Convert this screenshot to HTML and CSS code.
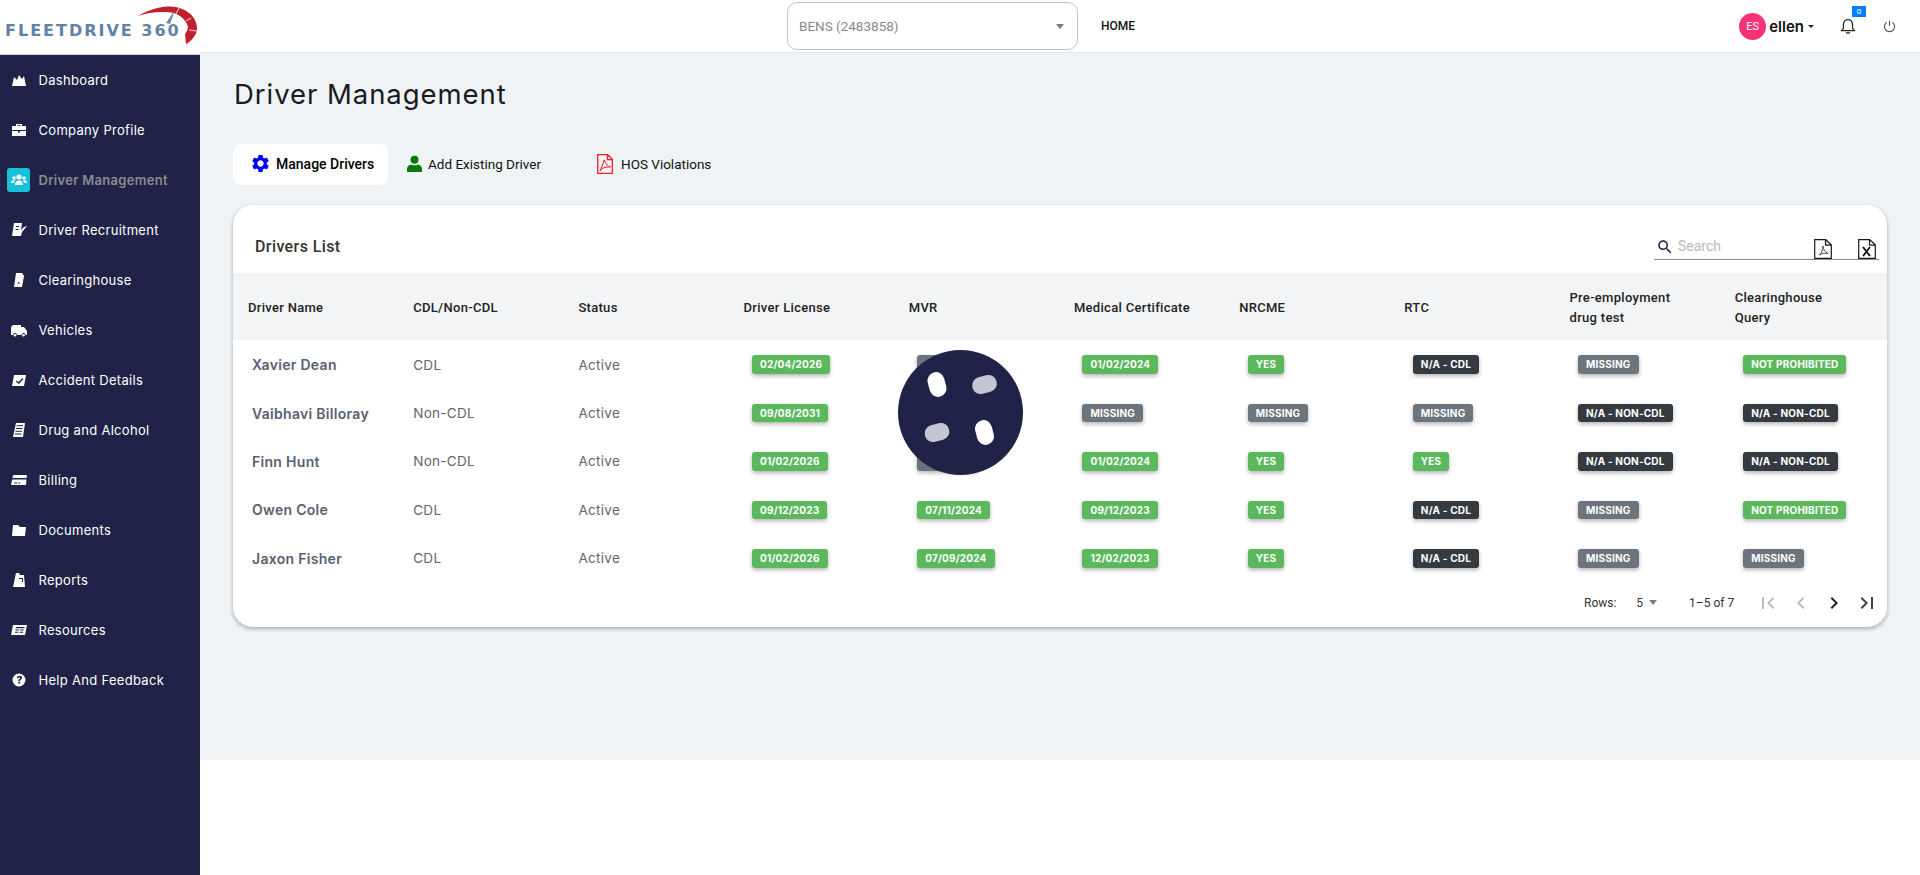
FILE: index.html
```html
<!DOCTYPE html>
<html lang="en">
  <head>
    <meta charset="UTF-8" />
    <meta name="viewport" content="width=device-width, initial-scale=1.0" />
    <title>FleetDrive 360 - Driver Management</title>
    <link rel="stylesheet" href="styles.css">
  </head>
  <body>
    <div class="container">
      <div class="header">
        <div class="logo">
          <span class="logo-text">FLEETDRIVE 360</span>
          <svg class="logo-gauge" viewBox="0 0 200 54">
            <path d="M138 16C150 9 160 6.500 170 6.500 186 7 197 17 197 28c0 6-4 12-11 16l-1-10c3-4 3.500-7 2-10-4-8-12-12-21-12-11-.5-19 1-28 4z" fill="#c01f30"/>
            <path d="M179 8l-3 6M191 18l-5 3M197 31l-8-1" stroke="#fff" stroke-width=".8"/>
            <path d="M166 23l9-13-5 14z" fill="#6d8cab"/>
          </svg>
        </div>
        <div class="account-select">
          <span>BENS (2483858)</span>
          <i class="caret caret-grey"></i>
        </div>
        <a class="home-link">HOME</a>
        <div class="user-area">
          <div class="avatar">ES</div>
          <span class="user-name">ellen</span>
          <i class="caret caret-dark"></i>
          <div class="bell">
            <svg viewBox="0 0 14 14" width="16" height="16"><path d="M7 1.500c-2.800 0-4 2-4 4.500v3L1.500 11h11L11 9V6c0-2.500-1.200-4.500-4-4.500zM5.500 12.500c.3 1 2.700 1 3 0" fill="none" stroke="#222" stroke-width="1.100"/></svg>
            <span class="bell-count">0</span>
          </div>
          <svg class="power" viewBox="0 0 14 14" width="13" height="13"><path d="M4 2.500a5.500 5.500 0 1 0 6 0M7 .8v5.400" fill="none" stroke="#3a4660" stroke-width="1.100"/></svg>
        </div>
      </div>

      <div class="main-content">
        <div class="sidebar">
          <a class="nav-item">
            <span class="nav-icon"><svg viewBox="0 0 16 16"><path d="M1 14l2-9 3 3 2-5 3 4 2-3 2 10z"/></svg></span>
            Dashboard
          </a>
          <a class="nav-item">
            <span class="nav-icon"><svg viewBox="0 0 16 16"><path d="M5 4V2h6v2h4v4H1V4zm1.300 0h3.400V3.200H6.300zM1 9h6v1.500h2V9h6v5H1z"/></svg></span>
            Company Profile
          </a>
          <a class="nav-item active">
            <span class="nav-icon"><svg viewBox="0 0 16 16"><circle cx="8" cy="5" r="2.600"/><circle cx="3" cy="6" r="1.800"/><circle cx="13" cy="6" r="1.800"/><path d="M4 13c0-3 1.500-4.500 4-4.500s4 1.500 4 4.500zM0 11c0-2 1-3 3-3l1 .5C3.200 9.300 3 10 3 11zM16 11c0-2-1-3-3-3l-1 .5c.8.8 1 1.500 1 2.500z"/></svg></span>
            Driver Management
          </a>
          <a class="nav-item">
            <span class="nav-icon"><svg viewBox="0 0 16 16"><path d="M3 1h8l-1 7 3-3 3-1-5 6-1 4H1zM5 4v1h3V4zM4.500 7v1h3V7z"/></svg></span>
            Driver Recruitment
          </a>
          <a class="nav-item">
            <span class="nav-icon"><svg viewBox="0 0 16 16"><path d="M5 1h6l2 3-2 11H3zM7 6c1 3 1 4-1 6 2-1 3-1 4 0-2-1-3-3-3-6z"/></svg></span>
            Clearinghouse
          </a>
          <a class="nav-item">
            <span class="nav-icon"><svg viewBox="0 0 16 16"><path d="M2 3h8v2h3l3 4v4h-1.500a2 2 0 0 0-4 0H6a2 2 0 0 0-4 0H0V5z"/><circle cx="4" cy="13.200" r="1.300"/><circle cx="12.500" cy="13.200" r="1.300"/></svg></span>
            Vehicles
          </a>
          <a class="nav-item">
            <span class="nav-icon"><svg viewBox="0 0 16 16"><path fill-rule="evenodd" d="M3 3h12l-2 11H1zm8.500 3L7.500 10 5.500 8.500 5 9.700 7.800 12l4.700-5z"/></svg></span>
            Accident Details
          </a>
          <a class="nav-item">
            <span class="nav-icon"><svg viewBox="0 0 16 16"><path d="M5 1h9l-2 14H2zM5.500 3.200v1h6.500v-1zM5 6v1h6.500V6zM4.500 8.800v1H11v-1zM4 11.500v1h6.500v-1z"/></svg></span>
            Drug and Alcohol
          </a>
          <a class="nav-item">
            <span class="nav-icon"><svg viewBox="0 0 16 16"><path fill-rule="evenodd" d="M3 3h13l-.5 3H1.500C1.800 4 2 3 3 3zM1.200 7.500h14.300L15 13H0zm2 3v1h3v-1zm4 0v1h2v-1z"/></svg></span>
            Billing
          </a>
          <a class="nav-item">
            <span class="nav-icon"><svg viewBox="0 0 16 16"><path d="M2 3h5l2 2h6l-1 9H1z"/></svg></span>
            Documents
          </a>
          <a class="nav-item">
            <span class="nav-icon"><svg viewBox="0 0 16 16"><path d="M5 1h3l1 2h4l1 12H2zM8 6v1h3v3h1V6z"/></svg></span>
            Reports
          </a>
          <a class="nav-item">
            <span class="nav-icon"><svg viewBox="0 0 16 16"><path fill-rule="evenodd" d="M2 3h14l-2 10H0zM5 5l-.2 1.200h8.500L13.500 5zM4.500 7.500l-.2 1h3.500l.2-1zm4.700 0l-.2 1h3.500l.2-1zM4 9.800l-.2 1h3.500l.2-1zm4.700 0l-.2 1H12l.2-1z"/></svg></span>
            Resources
          </a>
          <a class="nav-item">
            <span class="nav-icon"><svg viewBox="0 0 16 16"><path fill-rule="evenodd" d="M8 1.500a6.500 6.500 0 1 1 0 13 6.500 6.500 0 0 1 0-13zM5.800 6.300h1.800c.1-.8.4-1 .9-1s.8.300.7.8c-.1.600-1.700 1-1.900 2.900h1.700c.2-1 2-1.500 2.100-3.200C11.200 4.500 10 3.700 8.500 3.700c-1.500 0-2.600 1-2.700 2.600zM7.200 9.800v1.700H9V9.800z"/></svg></span>
            Help And Feedback
          </a>
        </div>

        <div class="page">
          <div class="page-body">
            <h1 class="page-title">Driver Management</h1>

            <div class="tabs">
              <a class="tab tab-active">
                <svg viewBox="0 0 24 24" width="21" height="21"><path d="M19.140 12.940c.04-.3.06-.61.06-.94 0-.32-.02-.64-.07-.94l2.030-1.580c.18-.14.23-.41.12-.61l-1.920-3.320c-.12-.22-.37-.29-.59-.22l-2.390.96c-.5-.38-1.030-.7-1.620-.94l-.36-2.540c-.04-.24-.24-.41-.48-.41h-3.840c-.24 0-.43.17-.47.41l-.36 2.540c-.59.24-1.130.57-1.620.94l-2.390-.96c-.22-.08-.47 0-.59.22L2.740 8.870c-.12.21-.08.47.12.61l2.030 1.580c-.05.3-.09.63-.09.94s.02.64.07.94l-2.030 1.580c-.18.14-.23.41-.12.61l1.920 3.320c.12.22.37.29.59.22l2.390-.96c.5.38 1.030.7 1.620.94l.36 2.540c.05.24.24.41.48.41h3.840c.24 0 .44-.17.47-.41l.36-2.540c.59-.24 1.130-.56 1.620-.94l2.390.96c.22.08.47 0 .59-.22l1.920-3.320c.12-.22.07-.47-.12-.61l-2.010-1.580zM12 15.600c-1.980 0-3.600-1.620-3.600-3.600s1.620-3.600 3.600-3.600 3.600 1.620 3.600 3.600-1.620 3.600-3.600 3.600z" fill="#0000ff"/></svg>
                Manage Drivers
              </a>
              <a class="tab tab-add">
                <svg viewBox="0 0 16 18" width="15" height="17"><circle cx="8" cy="5" r="4.300" fill="#0a7a0a"/><path d="M0 18v-3c0-3 2-4.500 4.500-5 2 1.300 5 1.300 7 0 2.500.5 4.500 2 4.500 5v3z" fill="#0a7a0a"/></svg>
                Add Existing Driver
              </a>
              <a class="tab tab-hos">
                <svg viewBox="0 0 16 20" width="16" height="20"><path d="M.7.700h10l4.600 4.600v14H.7zM10.500.700v5h4.800" fill="none" stroke="#f01c2c" stroke-width="1.300"/><path d="M7.500 6c1 4 3 6 6 7-3-.2-6 .3-8.500 1.500L3 17c1-3 3-6 4-11" fill="none" stroke="#f01c2c" stroke-width="1"/></svg>
                HOS Violations
              </a>
            </div>

            <div class="card">
              <div class="card-head">
                <h3>Drivers List</h3>
                <div class="search-box">
                  <svg class="search-icon" viewBox="0 0 24 24" width="18" height="18"><path d="M15.500 14h-.79l-.28-.27C15.410 12.590 16 11.110 16 9.500 16 5.910 13.090 3 9.500 3S3 5.910 3 9.500 5.910 16 9.500 16c1.610 0 3.090-.59 4.230-1.570l.27.28v.79l5 4.990L20.490 19l-4.990-5zm-6 0C7.010 14 5 11.990 5 9.500S7.010 5 9.500 5 14 7.010 14 9.500 11.990 14 9.500 14z" fill="#1b2340"/></svg>
                  <span class="search-text">Search</span>
                  <svg class="export-icon" viewBox="0 0 18 20" width="18" height="20"><path d="M.7.700h11l5.600 5v13.600H.7zM11.500.700v5.500h5.800" fill="#fff" stroke="#1a1a1a" stroke-width="1.200"/><path d="M9 7c.3 3.500 2 6 5 7.500-3-.6-6-.3-8.500 1.500 2-2 3.300-5 3.500-9z" fill="none" stroke="#333" stroke-width=".9"/></svg>
                  <svg class="export-icon export-xls" viewBox="0 0 18 20" width="18" height="20"><path d="M.7.700h11l5.600 5v13.600H.7zM11.500.700v5.500h5.800" fill="#fff" stroke="#1a1a1a" stroke-width="1.200"/><path d="M5 8l7 9M12 8l-7 9" stroke="#111" stroke-width="1.800"/></svg>
                </div>
              </div>

              <table class="drivers-table">
                <thead>
                  <tr>
                    <th>Driver Name</th>
                    <th>CDL/Non-CDL</th>
                    <th>Status</th>
                    <th>Driver License</th>
                    <th>MVR</th>
                    <th>Medical Certificate</th>
                    <th>NRCME</th>
                    <th>RTC</th>
                    <th>Pre-employment drug test</th>
                    <th>Clearinghouse Query</th>
                  </tr>
                </thead>
                <tbody>
                  <tr>
                    <td class="name">Xavier Dean</td>
                    <td>CDL</td>
                    <td>Active</td>
                    <td><span class="badge green">02/04/2026</span></td>
                    <td><span class="badge grey">MISSING</span></td>
                    <td><span class="badge green">01/02/2024</span></td>
                    <td><span class="badge green">YES</span></td>
                    <td><span class="badge dark">N/A - CDL</span></td>
                    <td><span class="badge grey">MISSING</span></td>
                    <td><span class="badge green">NOT PROHIBITED</span></td>
                  </tr>
                  <tr>
                    <td class="name">Vaibhavi Billoray</td>
                    <td>Non-CDL</td>
                    <td>Active</td>
                    <td><span class="badge green">09/08/2031</span></td>
                    <td><span class="badge grey">MISSING</span></td>
                    <td><span class="badge grey">MISSING</span></td>
                    <td><span class="badge grey">MISSING</span></td>
                    <td><span class="badge grey">MISSING</span></td>
                    <td><span class="badge dark">N/A - NON-CDL</span></td>
                    <td><span class="badge dark">N/A - NON-CDL</span></td>
                  </tr>
                  <tr>
                    <td class="name">Finn Hunt</td>
                    <td>Non-CDL</td>
                    <td>Active</td>
                    <td><span class="badge green">01/02/2026</span></td>
                    <td><span class="badge grey">MISSING</span></td>
                    <td><span class="badge green">01/02/2024</span></td>
                    <td><span class="badge green">YES</span></td>
                    <td><span class="badge green">YES</span></td>
                    <td><span class="badge dark">N/A - NON-CDL</span></td>
                    <td><span class="badge dark">N/A - NON-CDL</span></td>
                  </tr>
                  <tr>
                    <td class="name">Owen Cole</td>
                    <td>CDL</td>
                    <td>Active</td>
                    <td><span class="badge green">09/12/2023</span></td>
                    <td><span class="badge green">07/11/2024</span></td>
                    <td><span class="badge green">09/12/2023</span></td>
                    <td><span class="badge green">YES</span></td>
                    <td><span class="badge dark">N/A - CDL</span></td>
                    <td><span class="badge grey">MISSING</span></td>
                    <td><span class="badge green">NOT PROHIBITED</span></td>
                  </tr>
                  <tr>
                    <td class="name">Jaxon Fisher</td>
                    <td>CDL</td>
                    <td>Active</td>
                    <td><span class="badge green">01/02/2026</span></td>
                    <td><span class="badge green">07/09/2024</span></td>
                    <td><span class="badge green">12/02/2023</span></td>
                    <td><span class="badge green">YES</span></td>
                    <td><span class="badge dark">N/A - CDL</span></td>
                    <td><span class="badge grey">MISSING</span></td>
                    <td><span class="badge grey">MISSING</span></td>
                  </tr>
                </tbody>
              </table>

              <div class="pager">
                <span class="pager-rows">Rows:</span>
                <span class="pager-size">5</span>
                <i class="caret caret-grey"></i>
                <span class="pager-range">1–5 of 7</span>
                <div class="pager-buttons">
                  <svg viewBox="0 0 24 24" fill="#bdbdbd"><path d="M18.410 16.590L13.820 12l4.590-4.590L17 6l-6 6 6 6zM6 6h2v12H6z"/></svg>
                  <svg viewBox="0 0 24 24" fill="#bdbdbd"><path d="M15.410 7.410L14 6l-6 6 6 6 1.410-1.410L10.830 12z"/></svg>
                  <svg viewBox="0 0 24 24" fill="#222"><path d="M10 6L8.590 7.410 13.170 12l-4.580 4.590L10 18l6-6z"/></svg>
                  <svg viewBox="0 0 24 24" fill="#444"><path d="M5.590 7.410L10.180 12l-4.590 4.590L7 18l6-6-6-6zM16 6h2v12h-2z"/></svg>
                </div>
              </div>
            </div>
          </div>
        </div>
      </div>

      <!-- loading spinner over the table -->
      <svg class="loader" viewBox="0 0 125 125" width="125" height="125">
        <circle cx="62.500" cy="62.500" r="62.500" fill="#202347"/>
        <rect x="30.500" y="22" width="17" height="25" rx="8.500" fill="#fff" transform="rotate(-15 39 34.500)"/>
        <rect x="78" y="22" width="17" height="25" rx="8.500" fill="#c5c6d1" transform="rotate(75 86.500 34.500)"/>
        <rect x="30.500" y="70" width="17" height="25" rx="8.500" fill="#c5c6d1" transform="rotate(75 39 82.500)"/>
        <rect x="78" y="70" width="17" height="25" rx="8.500" fill="#fff" transform="rotate(-15 86.500 82.500)"/>
      </svg>
    </div>
  </body>
</html>
```

FILE: styles.css
```css
* {
  box-sizing: border-box;
  margin: 0;
  padding: 0;
}

body {
  font-family: 'Roboto', 'Liberation Sans', sans-serif;
  background: #ffffff;
  color: #222;
  height: 100vh;
  overflow: hidden;
}

.container {
  display: flex;
  flex-direction: column;
  height: 100vh;
}

/* top bar */
.header {
  height: 53px;
  flex-shrink: 0;
  display: flex;
  align-items: center;
  background: #fff;
  border-bottom: 1px solid #e3e7ec;
}

.logo {
  position: relative;
  width: 200px;
  height: 55px;
  flex-shrink: 0;
  align-self: flex-start;
  background: #fff;
  border-bottom: 1px solid #cfd2d8;
  padding: 22px 0 0 5px;
}

.logo-text {
  font-family: 'DejaVu Sans', sans-serif;
  font-weight: 700;
  font-size: 16px;
  line-height: 17px;
  letter-spacing: 2px;
  color: #5f83a6;
  display: block;
  white-space: nowrap;
}

.logo-gauge {
  position: absolute;
  left: 0;
  top: 0;
  width: 200px;
  height: 54px;
}

.account-select {
  width: 291px;
  height: 48px;
  margin-left: 587px;
  padding: 0 13px 0 11px;
  display: flex;
  align-items: center;
  justify-content: space-between;
  border: 1px solid #c4c4c4;
  border-radius: 10px;
  font-size: 13.500px;
  color: #8a8a8a;
}

.home-link {
  margin-left: 23px;
  font-size: 12px;
  font-weight: 500;
  color: #111;
}

.caret {
  display: inline-block;
  width: 0;
  height: 0;
  border-left: 4px solid transparent;
  border-right: 4px solid transparent;
}

.caret-grey {
  border-top: 5px solid #7d7d7d;
}

.caret-dark {
  border-left-width: 3px;
  border-right-width: 3px;
  border-top: 3px solid #222;
  margin-left: 4px;
}

.user-area {
  margin-left: auto;
  display: flex;
  align-items: center;
  padding-right: 24px;
}

.avatar {
  width: 27px;
  height: 27px;
  border-radius: 50%;
  background: #f73378;
  color: #fff;
  font-size: 11px;
  display: flex;
  align-items: center;
  justify-content: center;
}

.user-name {
  margin-left: 3px;
  font-family: 'Inter', sans-serif;
  font-size: 15px;
  font-weight: 600;
  color: #111;
}

.bell {
  position: relative;
  display: flex;
  margin-left: 26px;
  margin-right: 27px;
}

.bell-count {
  position: absolute;
  left: 12px;
  top: -12px;
  width: 14px;
  height: 11px;
  background: #0a7cff;
  color: #fff;
  font-size: 8px;
  line-height: 11px;
  text-align: center;
}

.main-content {
  flex: 1;
  display: flex;
  overflow: hidden;
}

/* left menu */
.sidebar {
  width: 200px;
  flex-shrink: 0;
  margin-top: 2px;
  background: #202347;
}

.nav-item {
  height: 50px;
  display: flex;
  align-items: center;
  gap: 8.500px;
  padding-left: 7px;
  font-family: 'Inter', sans-serif;
  font-size: 13px;
  font-weight: 400;
  letter-spacing: .3px;
  color: #fff;
}

.nav-icon {
  width: 23px;
  height: 24px;
  border-radius: 3px;
  display: flex;
  align-items: center;
  justify-content: center;
  flex-shrink: 0;
}

.nav-icon svg {
  width: 16px;
  height: 16px;
  fill: #fff;
}

.nav-item.active {
  color: #8a8a94;
  font-weight: 600;
}

.nav-item.active .nav-icon {
  background: #17c1d9;
}

/* page */
.page {
  flex: 1;
  min-width: 0;
}

.page-body {
  height: 707px;
  background: #eff3f6;
  padding: 0 33px;
}

.page-title {
  padding: 25px 0 0 1px;
  font-family: 'Inter', sans-serif;
  font-size: 27.500px;
  line-height: 32px;
  font-weight: 400;
  letter-spacing: .95px;
  color: #1a1a1a;
}

.tabs {
  display: flex;
  margin-top: 34px;
  height: 41px;
}

.tab {
  display: flex;
  align-items: center;
  padding-bottom: 2px;
  font-size: 13.500px;
  color: #111;
  border-radius: 8px;
}

.tab-active {
  width: 155px;
  padding-left: 17px;
  gap: 5px;
  background: #fff;
  font-size: 14px;
  font-weight: 500;
  color: #000;
}

.tab-add {
  padding-left: 19px;
  width: 209px;
  gap: 6px;
}

.tab-hos {
  gap: 8px;
}

.card {
  margin-top: 20px;
  height: 422px;
  background: #fff;
  border-radius: 20px;
  box-shadow: 0 2px 4px rgba(0, 0, 0, .3);
  overflow: hidden;
}

.card-head {
  height: 68px;
  display: flex;
  align-items: flex-start;
  justify-content: space-between;
  padding: 0 8px 0 22px;
}

.card-head h3 {
  margin-top: 32px;
  font-size: 16px;
  line-height: 20px;
  font-weight: 500;
  letter-spacing: .4px;
  color: #333;
}

.search-box {
  margin-top: 33px;
  width: 225px;
  height: 22px;
  display: flex;
  align-items: flex-end;
  border-bottom: 1px solid #8a8a8a;
}

.search-icon {
  margin: 0 0 3px 2px;
  align-self: center;
}

.search-text {
  margin: 0 0 5px 4px;
  width: 136px;
  align-self: center;
  font-size: 14px;
  color: #b9b9b9;
}

.export-icon {
  flex-shrink: 0;
}

.export-xls {
  margin-left: 26px;
}

.drivers-table {
  width: 100%;
  table-layout: fixed;
  border-collapse: collapse;
}

.drivers-table th {
  width: 165.200px;
  height: 67px;
  padding: 2px 30px 0 15px;
  background: #f3f4f6;
  font-size: 13px;
  line-height: 20px;
  font-weight: 500;
  letter-spacing: .3px;
  text-align: left;
  color: #222;
}

.drivers-table th:last-child {
  width: auto;
}

.drivers-table td {
  height: 48.400px;
  padding: 1px 0 0 15px;
  font-family: 'Inter', sans-serif;
  font-size: 13.500px;
  letter-spacing: .3px;
  color: #666;
}

.drivers-table td.name {
  padding-left: 19px;
  font-size: 14px;
  font-weight: 600;
  color: #5a6070;
}

.badge {
  display: inline-block;
  height: 18.500px;
  margin-left: 8.500px;
  padding: 0 8px;
  border-radius: 3px;
  font-size: 10px;
  line-height: 18.500px;
  font-weight: 700;
  letter-spacing: .2px;
  white-space: nowrap;
  color: #fff;
  box-shadow: 0 2px 4px rgba(0, 0, 0, .3);
  vertical-align: middle;
}

.green { background: #5cb85c; }
.grey { background: #6c757d; }
.dark { background: #343a40; }

.pager {
  height: 42px;
  display: flex;
  align-items: center;
  padding-left: 1351px;
  font-size: 12px;
  color: #333;
  white-space: nowrap;
}

.pager .caret {
  margin-left: 6px;
}

.pager-size {
  margin-left: 20px;
}

.pager-range {
  margin-left: 32px;
}

.pager-buttons {
  display: flex;
  margin-left: 22px;
  gap: 9px;
}

.pager-buttons svg {
  width: 24px;
  height: 24px;
  flex-shrink: 0;
}

.loader {
  position: absolute;
  left: 898px;
  top: 350px;
}
```
